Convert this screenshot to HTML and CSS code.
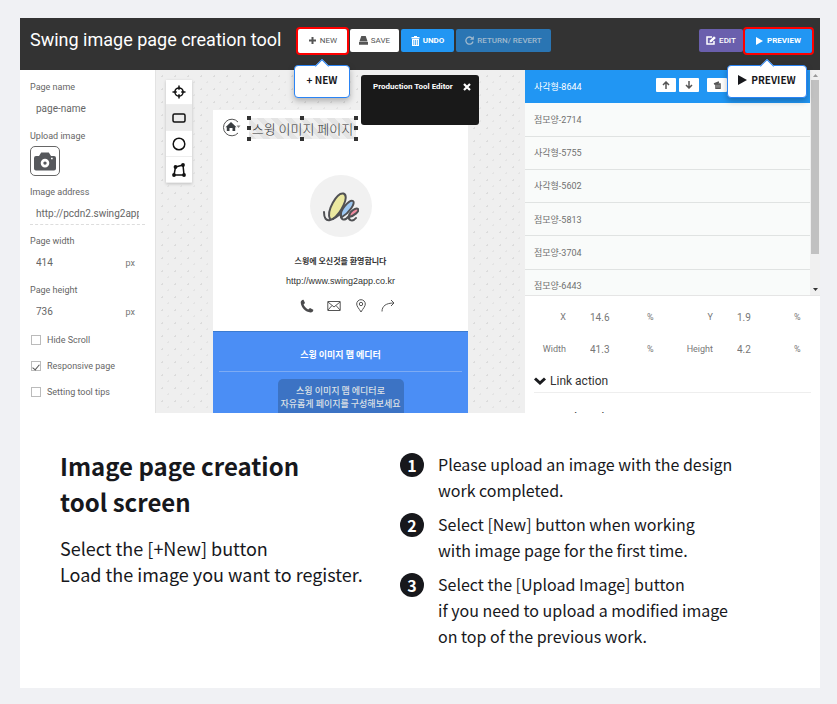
FILE: index.html
```html
<!DOCTYPE html>
<html lang="en">
<head>
<meta charset="utf-8">
<meta name="viewport" content="width=device-width, initial-scale=1">
<title>Swing image page creation tool</title>
<link rel="stylesheet" href="styles.css">
</head>
<body>
<main class="card">
  <section class="editor">
    <header class="topbar">
      <h1 class="brand">Swing image page creation tool</h1>
      <div class="actions">
        <div class="marked">
          <button class="btn"><svg width="9" height="9" viewBox="0 0 9 9"><path d="M3.500 1h2v2.500h2.500v2H5.500V8h-2V5.500H1v-2h2.500z"/></svg>NEW</button>
          <div class="tip">+ NEW</div>
        </div>
        <button class="btn"><svg width="9" height="9" viewBox="0 0 9 9"><path d="M2.300 0h4.400L8.600 5.400H.4zM0 6h9v2.800H0z"/></svg>SAVE</button>
        <button class="btn blue"><svg width="9" height="10" viewBox="0 0 9 10"><path fill-rule="evenodd" d="M3 0h3v1h2.500v1.400H.5V1H3zM1 3h7v7H1zM2.500 4v5h.7V4zM4.200 4v5h.7V4zM5.900 4v5h.7V4z"/></svg>UNDO</button>
        <button class="btn blue off"><svg width="9" height="9" viewBox="0 0 9 9"><path d="M7.300 2.300A3.600 3.600 0 1 0 8 5.500" fill="none" stroke="currentColor" stroke-width="1.300"/><path d="M8.800 0v3.800H5z"/></svg>RETURN/ REVERT</button>
      </div>
      <div class="actions end">
        <button class="btn violet"><svg width="10" height="9" viewBox="0 0 10 9"><path d="M6 1H1v7h7V5" fill="none" stroke="currentColor" stroke-width="1.500"/><path d="M3.500 6.500L4 4.300 8 .3 9.800 2 5.700 6z"/></svg>EDIT</button>
        <div class="marked">
          <button class="btn blue wide"><svg width="7" height="8" viewBox="0 0 7 8"><path d="M0 0l7 4-7 4z"/></svg>PREVIEW</button>
          <div class="tip large"><svg width="9" height="10" viewBox="0 0 9 10"><path d="M0 0l9 5-9 5z"/></svg>PREVIEW</div>
        </div>
      </div>
    </header>

    <div class="workspace">
      <form class="settings">
        <div class="field"><label for="name">Page name</label><input id="name" value="page-name"></div>
        <div class="upload"><label for="upload">Upload image</label>
          <button type="button" id="upload" aria-label="Upload image"><svg width="22" height="19" viewBox="0 0 22 19"><path fill="#56585c" fill-rule="evenodd" d="M2 4h3l2.200-3.500h7.600L17 4h3a2 2 0 0 1 2 2v10.500a2 2 0 0 1-2 2H2a2 2 0 0 1-2-2V6a2 2 0 0 1 2-2zM11 6.800a4.300 4.300 0 1 0 0 8.600 4.300 4.300 0 0 0 0-8.600zm0 2.600a1.700 1.700 0 1 1 0 3.400 1.700 1.700 0 0 1 0-3.400zM17 5.800v1.500h1.700V5.800z"/></svg></button>
        </div>
        <div class="field"><label for="addr">Image address</label><input id="addr" class="dashed" value="http://pcdn2.swing2app.co.kr"></div>
        <div class="field"><label for="pw">Page width</label><div class="unit"><input id="pw" value="414"><span>px</span></div></div>
        <div class="field"><label for="ph">Page height</label><div class="unit"><input id="ph" value="736"><span>px</span></div></div>
        <div class="checks">
          <label><input type="checkbox">Hide Scroll</label>
          <label><input type="checkbox" checked>Responsive page</label>
          <label><input type="checkbox">Setting tool tips</label>
        </div>
      </form>

      <div class="canvas">
        <div class="toolbox">
          <button aria-label="Select"><svg width="14" height="14" viewBox="0 0 14 14"><circle cx="7" cy="7" r="4.100"/><path d="M7 .5v4.300M7 9.200v4.300M.5 7h4.300M9.200 7h4.300"/></svg></button>
          <button class="active" aria-label="Rectangle"><svg width="14" height="14" viewBox="0 0 14 14"><rect x="1" y="3" width="12" height="8" rx="1.500"/></svg></button>
          <button aria-label="Circle"><svg width="14" height="14" viewBox="0 0 14 14"><circle cx="7" cy="7" r="5.800"/></svg></button>
          <button aria-label="Polygon"><svg width="14" height="14" viewBox="0 0 14 14"><path d="M3.500 4L11 2l1 10H2z"/><g fill="#111" stroke="none"><circle cx="3.500" cy="4" r="1.900"/><circle cx="11" cy="2" r="1.900"/><circle cx="12" cy="12" r="1.900"/><circle cx="2" cy="12" r="1.900"/></g></svg></button>
        </div>
        <article class="page">
          <div class="page-head">
            <svg width="19" height="19" viewBox="0 0 19 19"><path d="M16 4A8.300 8.300 0 1 0 16 15" fill="none" stroke="#555" stroke-width="1"/><path fill="#3a3e42" d="M9 4L3.500 9.200h1.300V13h2.700v-3h3v3h2.700V9.200h1.300z"/><path fill="#888" d="M14.500 7.500h4L16.500 10z"/></svg>
            <div class="selection">스윙 이미지 페이지<i></i><i></i><i></i><i></i><i></i><i></i><i></i><i></i></div>
          </div>
          <div class="avatar"><svg width="36" height="31" viewBox="0 0 36 31"><g stroke="#505154" stroke-width="2" stroke-linecap="round" stroke-linejoin="round"><path fill="#ebe8a0" d="M7 28C3 20 14 1 20.500 2.500 27 5 18 22 10 28"/><path fill="#9ec8f2" d="M18 26c-2-7 9-18 12-16s-4 12-11 16"/><path fill="#f08ca0" d="M26 25c0-4 7-9 9-7s-4 7-9 8"/><path fill="none" d="M1 21c0 6 2 9 6 8 4-1 8-4 11-7-1 7 3 9 8 3-1 5 4 6 7 2"/></g></svg></div>
          <p class="welcome">스윙에 오신것을 환영합니다</p>
          <p class="url">http://www.swing2app.co.kr</p>
          <div class="contact">
            <svg width="14" height="14" viewBox="0 0 14 14"><path fill="#4b4b4d" d="M3.500.7L5 4 3.600 5.600c.8 2 2.500 3.800 4.600 4.800L10 9l3.300 1.700c.2 1.500-1.300 2.800-2.800 2.700C5.500 13 1 8.500.7 3.500.6 2 2 .5 3.500.7z"/></svg>
            <svg width="14" height="14" viewBox="0 0 14 14"><path d="M.8 2.500h12.400v9H.8zM1 3l6 5 6-5M1 11l4-4.500M13 11L9 6.500"/></svg>
            <svg width="14" height="14" viewBox="0 0 14 14"><path d="M7 13C5 9.500 2.700 7.500 2.700 5a4.300 4.300 0 0 1 8.600 0C11.300 7.500 9 9.500 7 13z"/><circle cx="7" cy="5" r="1.700"/></svg>
            <svg width="14" height="14" viewBox="0 0 14 14"><path d="M1 12.500C1 7 5 4 13 4M10 1l3 3-3 3"/></svg>
          </div>
          <div class="blue-area">
            <h2>스윙 이미지 맵 에디터</h2>
            <p class="bubble">스윙 이미지 맵 에디터로<br>자유롭게 페이지를 구성해보세요</p>
          </div>
        </article>
        <div class="toast"><strong>Production Tool Editor</strong><button aria-label="Close"><svg width="8" height="8" viewBox="0 0 8 8"><path d="M1 1l6 6M7 1L1 7" stroke="#fff" stroke-width="2.200"/></svg></button></div>
      </div>

      <aside class="inspector">
        <div class="layers">
          <ul>
            <li class="current">사각형-8644<span class="tools">
              <button aria-label="Move up"><svg width="8" height="8" viewBox="0 0 8 8"><path d="M4 8V1M1 4l3-3 3 3"/></svg></button>
              <button aria-label="Move down"><svg width="8" height="8" viewBox="0 0 8 8"><path d="M4 0v7M1 4l3 3 3-3"/></svg></button>
              <button class="del" aria-label="Delete"><svg width="8" height="8" viewBox="0 0 8 8"><path d="M1 3l5-2M3 3h4v4.500H3zM5 3v4"/></svg></button>
            </span></li>
            <li>점모양-2714</li><li>사각형-5755</li><li>사각형-5602</li><li>점모양-5813</li><li>점모양-3704</li><li>점모양-6443</li>
          </ul>
          <div class="scroll"><svg width="5" height="3" viewBox="0 0 5 3"><path fill="#999" d="M0 3h5L2.500 0z"/></svg><span></span><svg width="5" height="3" viewBox="0 0 5 3"><path fill="#333" d="M0 0h5L2.500 3z"/></svg></div>
        </div>
        <div class="geometry">
          <label for="gx">X</label><input id="gx" value="14.6"><span>%</span>
          <label for="gy">Y</label><input id="gy" value="1.9"><span>%</span>
          <label for="gw">Width</label><input id="gw" value="41.3"><span>%</span>
          <label for="gh">Height</label><input id="gh" value="4.2"><span>%</span>
        </div>
        <h3><svg width="12" height="8" viewBox="0 0 12 8"><path d="M1 1.500l5 4.500 5-4.500" fill="none" stroke="#1a1b1e" stroke-width="3"/></svg>Link action</h3>
        <h3><svg width="12" height="8" viewBox="0 0 12 8"><path d="M1 1.500l5 4.500 5-4.500" fill="none" stroke="#1a1b1e" stroke-width="3"/></svg>Read mode</h3>
      </aside>
    </div>
  </section>

  <section class="guide">
    <div>
      <h2>Image page creation<br>tool screen</h2>
      <p>Select the [+New] button<br>Load the image you want to register.</p>
    </div>
    <ol>
      <li><b>1</b><span>Please upload an image with the design<br>work completed.</span></li>
      <li><b>2</b><span>Select [New] button when working<br>with image page for the first time.</span></li>
      <li><b>3</b><span>Select the [Upload Image] button<br>if you need to upload a modified image<br>on top of the previous work.</span></li>
    </ol>
  </section>
</main>
</body>
</html>
```
FILE: styles.css
```css
* { box-sizing: border-box; }
body { margin: 0; padding: 18px 17px 16px 20px; min-height: 100vh; display: flex; background: #f0f1f4; color: #17181c; font-family: Roboto, "Noto Sans CJK KR", sans-serif; font-size: 9px; }
h1, h2, h3, p, ul, ol { margin: 0; padding: 0; font-weight: 400; }
ul, ol { list-style: none; }
button, input { font: inherit; color: inherit; }
button { border: 0; padding: 0; cursor: pointer; display: flex; align-items: center; justify-content: center; }
svg { display: block; flex: none; }
.card { flex: 1; background: #fff; }

.editor { height: 395px; display: flex; flex-direction: column; overflow: hidden; }
.topbar { height: 52px; flex: none; display: flex; align-items: flex-start; padding: 8px 6px 0 10px; background: #333; }
.brand { width: 266px; flex: none; font-size: 18px; line-height: 28px; color: #fff; white-space: nowrap; }
.actions { display: flex; align-items: center; height: 29px; gap: 2px; }
.end { margin-left: auto; gap: 0; }
.marked { position: relative; border: 2px solid #f00; border-radius: 4px; }
.actions:not(.end) .marked { margin-right: -1px; }
.btn { height: 23px; min-width: 49px; gap: 3px; border-radius: 2px; background: #fff; color: #555; font-size: 8px; white-space: nowrap; }
.btn svg, .tip svg { fill: currentColor; }
.blue { min-width: 53px; background: #2196f3; color: #fff; font-weight: 700; }
.wide { min-width: 67px; gap: 4px; }
.off { min-width: 95px; background: #2a75b3; color: #9fb9ce; font-weight: 500; }
.violet { min-width: 44px; background: #6a5fad; color: #fff; font-weight: 500; }
.marked .btn { height: 24px; }
.tip { position: absolute; z-index: 5; top: 36px; left: -4px; width: 56px; height: 33px; display: flex; align-items: center; justify-content: center; gap: 4px; padding-bottom: 3px; background: #fff; border: 1px solid #2a84f5; border-radius: 4px; box-shadow: 0 3px 6px #0004; font: 700 10px "Noto Sans CJK KR", sans-serif; color: #17181c; white-space: nowrap; }
.tip.large { left: -18px; width: 80px; }
.tip::before { content: ""; position: absolute; top: -5px; left: calc(50% - 5px); width: 9px; height: 9px; background: #fff; border: solid #2a84f5; border-width: 1px 0 0 1px; transform: rotate(45deg); }

.workspace { flex: 1; min-height: 0; display: flex; }
.settings { width: 135px; flex: none; padding: 11px 10px 0; display: flex; flex-direction: column; gap: 10px; color: #666; }
.settings label { display: block; font-size: 9px; line-height: 12px; }
.settings .field input { display: block; width: 100%; height: 23px; margin-top: 4px; padding: 0 6px; border: 0; border-bottom: 1px solid transparent; background: none; font-size: 10px; outline: 0; }
.settings .field .dashed { border-bottom: 1px dashed #ddd; }
.unit { display: flex; align-items: center; padding-right: 10px; }
.unit input { flex: 1; min-width: 0; }
.unit span { margin-top: 4px; }
.upload button { width: 30px; height: 30px; margin-top: 4px; background: #fff; border: 1px solid #666; border-radius: 5px; }
.checks { display: flex; flex-direction: column; margin-top: -6px; }
.checks label { display: flex; align-items: center; gap: 6px; height: 26px; }
.checks input { appearance: none; width: 10px; height: 10px; margin: 0 0 0 1px; border: 1px solid #bbb; display: grid; place-items: center; }
.checks input:checked::after { content: ""; width: 3px; height: 6px; border: solid #555; border-width: 0 1px 1px 0; transform: rotate(40deg); }

.canvas { position: relative; flex: 1; min-width: 0; display: flex; align-items: flex-start; gap: 21px; padding: 10px 57px 0 10px; border-left: 1px solid #e3e3e3; background-color: #efefef; background-image: radial-gradient(circle, #dcdcdc 1px, transparent 1px), radial-gradient(circle, #e4e4e4 1px, transparent 1px); background-size: 13px 13px; background-position: 0 0, 6px 6px; }
.toolbox { width: 26px; flex: none; box-shadow: 0 1px 3px #0003; }
.toolbox button { width: 100%; height: 25px; background: #fff; border-bottom: 1px solid #eee; }
.toolbox .active { background: #ececec; }
.toolbox button:nth-child(n+2) { height: 26px; }
.toolbox svg { fill: none; stroke: #111; stroke-width: 1.500; }
.page { flex: 1; margin-top: 30px; background: #fff; text-align: center; }
.page-head { display: flex; gap: 8px; padding: 8px 9px 0; }
.selection { position: relative; width: 107px; height: 21px; display: flex; align-items: center; justify-content: center; font: 300 13px "Noto Sans CJK KR", sans-serif; white-space: nowrap; color: #333; background: repeating-linear-gradient(45deg, #e4e4e4 0 5px, #efefef 5px 10px); }
.selection i { position: absolute; width: 4px; height: 4px; background: #333; }
.selection i:nth-child(1), .selection i:nth-child(4), .selection i:nth-child(6) { left: -2px; }
.selection i:nth-child(2), .selection i:nth-child(7) { left: 51px; }
.selection i:nth-child(3), .selection i:nth-child(5), .selection i:nth-child(8) { left: 105px; }
.selection i:nth-child(-n+3) { top: -2px; }
.selection i:nth-child(4), .selection i:nth-child(5) { top: 8px; }
.selection i:nth-child(n+6) { bottom: -2px; }
.avatar { width: 62px; height: 62px; margin: 36px auto 0; display: grid; place-items: center; border-radius: 50%; background: #f1f1f1; }
.welcome { margin-top: 18px; font: 700 8px/12px "Noto Sans CJK KR", sans-serif; color: #333; }
.url { margin-top: 8px; font: 9px/12px "Liberation Sans", sans-serif; color: #333; }
.contact { display: flex; justify-content: center; gap: 13px; margin: 12px 0 0 14px; }
.contact svg { fill: none; stroke: #555; stroke-width: 1; }
.contact svg:first-child { stroke: none; }
.blue-area { height: 110px; margin-top: 18px; padding: 16px 6px 0; border-top: 1px solid #3c7bd0; background: #4b8ef5; color: #fff; }
.blue-area h2 { padding-bottom: 9px; border-bottom: 1px solid #7dabf4; font: 700 9px/14px "Noto Sans CJK KR", sans-serif; }
.bubble { width: 126px; height: 46px; margin: 7px auto 0; padding-top: 5px; border-radius: 5px; background: #3c73c4; color: #dbe0e6; font: 500 9px/13px "Noto Sans CJK KR", sans-serif; white-space: nowrap; }
.toast { position: absolute; top: 5px; left: 205px; width: 118px; height: 50px; display: flex; align-items: flex-start; justify-content: space-between; padding: 7px 8px 0 12px; background: #191919; border-radius: 3px; color: #fff; font-size: 8px; line-height: 10px; white-space: nowrap; }
.toast button { background: none; height: 9px; }

.inspector { width: 295px; flex: none; background: #fff; }
.layers { height: 226px; display: flex; overflow: hidden; border-bottom: 1px solid #e5e5e5; }
.layers ul { flex: 1; height: 233px; display: grid; grid-template-rows: repeat(7, 1fr); }
.layers li { display: flex; align-items: center; justify-content: space-between; padding: 0 9px; border-bottom: 1px solid #e0e3e2; background: #f9fbfa; color: #707070; }
.layers .current { padding-right: 83px; background: #2196f3; border-color: #2196f3; color: #fff; }
.tools { display: flex; gap: 3px; margin-top: -3px; }
.tools button { width: 20px; height: 14px; border-radius: 1px; background: #fff; }
.tools .del { margin-left: 5px; }
.tools svg { fill: none; stroke: #555; stroke-width: 1.500; }
.scroll { width: 10px; display: flex; flex-direction: column; align-items: center; padding: 4px 1px; gap: 3px; background: #f0f0f0; }
.scroll span { width: 100%; height: 174px; background: #c1c1c1; }
.scroll svg:last-child { margin-top: auto; }
.geometry { display: grid; grid-template-columns: 41px 57px 30px 60px 57px 1fr; align-items: center; padding-top: 5px; color: #777; font-size: 9px; }
.geometry label { text-align: right; }
.geometry input { width: 100%; height: 32px; padding: 0 0 0 24px; border: 0; background: none; font-size: 10px; outline: 0; }
.geometry span { padding-left: 24px; }
.geometry span, .unit span { color: #777; }
.inspector h3 { display: flex; align-items: center; gap: 4px; height: 24px; margin: 4px 9px 0; border-bottom: 1px solid #eee; font-size: 12px; color: #333; }
.inspector h3 + h3 { margin-top: 13px; }

.guide { display: grid; grid-template-columns: 340px 1fr; padding: 35px 20px 36px 40px; font-family: "Noto Sans CJK KR", sans-serif; white-space: nowrap; }
.guide h2 { font-size: 24px; font-weight: 700; line-height: 36px; }
.guide p { margin-top: 15px; font-size: 18px; line-height: 26px; }
.guide ol { display: flex; flex-direction: column; gap: 8px; padding-top: 3px; }
.guide li { display: flex; gap: 14px; font-size: 16px; line-height: 26px; }
.guide b { width: 24px; height: 24px; flex: none; margin-top: 2px; display: grid; place-items: center; border-radius: 50%; background: #17181c; color: #fff; font-size: 16px; line-height: 24px; }
```
